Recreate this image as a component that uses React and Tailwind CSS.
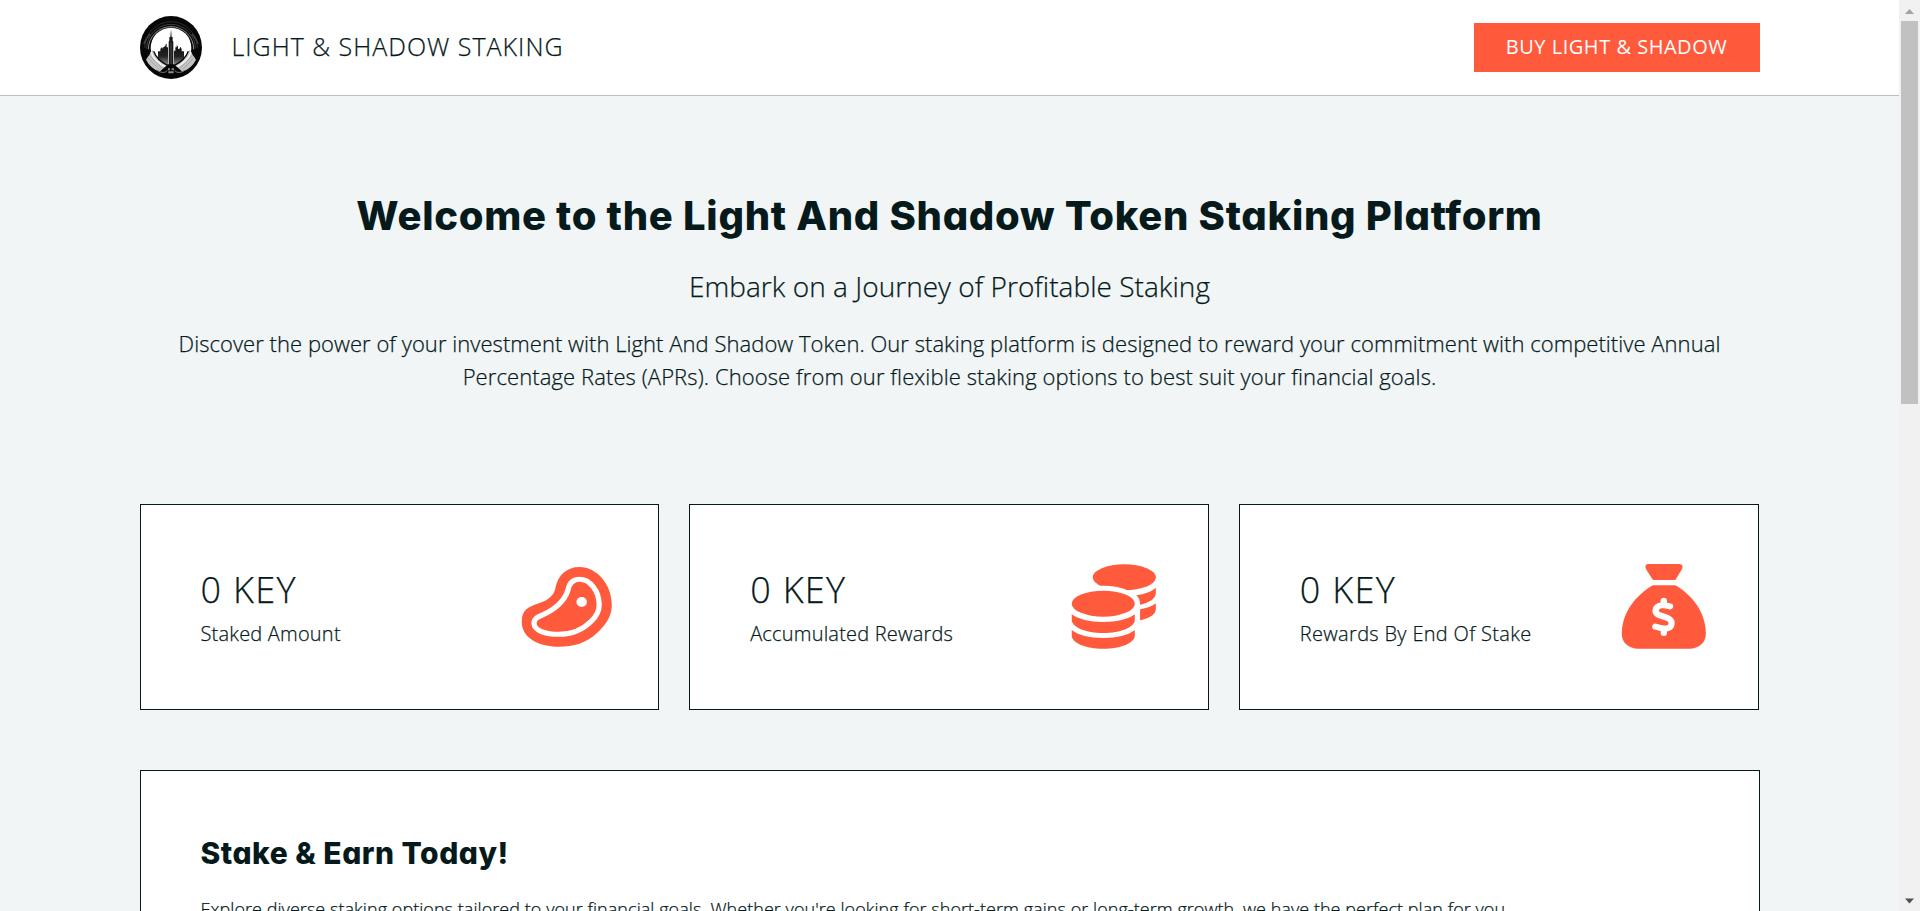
import React from "react";

function Logo() {
  return (
    <svg viewBox="0 0 186 189" className="h-[63px] w-[62px] shrink-0" aria-hidden="true">
      <defs>
        <clipPath id="disc">
          <ellipse cx="93" cy="94.5" rx="93" ry="94.5" />
        </clipPath>
        <linearGradient id="tower" x1="0" y1="0" x2="0" y2="1">
          <stop offset="0" stopColor="#111" />
          <stop offset="0.55" stopColor="#222" />
          <stop offset="1" stopColor="#9a9a9a" />
        </linearGradient>
      </defs>
      <g clipPath="url(#disc)">
        <rect width="186" height="189" fill="#070707" />
        <g fill="none">
          <path d="M14 96A79 79 0 0 1 172 96" stroke="#2b2b2b" strokeWidth="3" />
          <path d="M20 98A73 73 0 0 1 166 98" stroke="#5a5a5a" strokeWidth="2" />
          <path d="M25 100A68 68 0 0 1 161 100" stroke="#8f8f8f" strokeWidth="3" />
          <path d="M12 84Q18 66 30 54M174 84Q168 66 156 54" stroke="#444" strokeWidth="5" />
        </g>
        <circle cx="93" cy="96" r="61" fill="#fff" />
        <g fill="url(#tower)">
          <path d="M54 114V106H61V99L65 94L68 99V94H72L75 89H77V84H80V94H84V150H54Z" />
          <path d="M132 114V106H125V99L121 92L118 99H114V92L110 87V94H106V104H102V150H132Z" />
        </g>
        <path d="M93 40L95 63H98V74L100 77V152H86V77L88 74V63H91Z" fill="#1b1b1b" />
        <path d="M93 80V148" stroke="#777" strokeWidth="1.5" />
        <path d="M18 131L38 101Q46 132 82 150L60 168Q30 156 18 131Z" fill="#c4c4c4" />
        <path d="M168 131L148 101Q140 132 104 150L126 168Q156 156 168 131Z" fill="#c4c4c4" />
        <path d="M33 108Q43 138 80 154M153 108Q143 138 106 154" fill="none" stroke="#f4f4f4" strokeWidth="5" />
        <path d="M41 106Q50 132 84 149M145 106Q136 132 102 149" fill="none" stroke="#0a0a0a" strokeWidth="4" />
        <path d="M22 124L58 160M27 117L66 157M164 124L128 160M159 117L120 157" stroke="#999" strokeWidth="2" />
        <path d="M52 173L84 145H102L134 173L93 184Z" fill="#070707" />
        <path d="M50 162Q70 176 82 164M136 162Q116 176 104 164" fill="none" stroke="#777" strokeWidth="3" />
        <path d="M84 157H90V163H84ZM95 157H102V163H95ZM85 166H101V172H85Z" fill="#8d8d8d" />
      </g>
    </svg>
  );
}

function StatIcon({ children }) {
  return (
    <svg
      viewBox="1111 222 274 258"
      preserveAspectRatio="none"
      className="mt-px h-[86px] w-24 shrink-0 text-[#ff5a3c]"
      fill="currentColor"
      aria-hidden="true"
    >
      {children}
    </svg>
  );
}

function SteakIcon() {
  return (
    <StatIcon>
      <path d="M1281 231C1330 231 1373 283 1373 345C1373 378 1358 402 1330 430C1299 460 1265 470 1222 470C1163 470 1116 443 1116 395C1116 360 1135 350 1165 340C1198 328 1209 312 1213 290C1220 255 1245 231 1281 231Z" />
      <path
        d="M1281 268C1310 268 1337 302 1337 345C1337 363 1331 377 1315 393C1290 420 1260 433 1222 433C1184 433 1151 422 1151 400C1151 385 1161 381 1175 375C1215 356 1239 331 1248 300C1252 278 1262 268 1281 268Z"
        fill="none"
        stroke="#fff"
        strokeWidth="15"
      />
      <circle cx="1287" cy="336" r="15" fill="#fff" />
    </StatIcon>
  );
}

function CoinsIcon() {
  return (
    <StatIcon>
      <ellipse cx="1266" cy="262" rx="90" ry="39" />
      <ellipse cx="1206" cy="341" rx="105" ry="54" fill="#fff" />
      <ellipse cx="1206" cy="341" rx="90" ry="39" />
      <path d="M1116 373C1134 388 1167 396 1206 396S1278 388 1296 373V390C1296 411 1256 429 1206 429S1116 411 1116 390Z" />
      <path d="M1116 420C1134 436 1167 444 1206 444S1278 436 1296 420V437C1296 458 1256 476 1206 476S1116 458 1116 437Z" />
      <path d="M1300 316C1325 312 1345 304 1356 293V308C1356 325 1338 338 1311 344C1311 332 1308 322 1300 316Z" />
      <path d="M1311 358C1330 355 1346 349 1356 340V356C1356 373 1338 385 1311 391Z" />
    </StatIcon>
  );
}

function MoneyBagIcon() {
  return (
    <StatIcon>
      <path d="M1191 222H1281Q1293 224 1288 237L1269 270H1205L1185 237Q1180 224 1191 222Z" />
      <path d="M1205 286H1269C1315 314 1356 365 1356 432C1356 458 1336 476 1309 476H1163C1136 476 1116 458 1116 432C1116 365 1159 314 1205 286Z" />
      <path
        d="M1254 349C1243 346 1236 344 1228 346C1211 349 1207 367 1222 375C1232 380 1243 380 1252 387C1262 395 1260 411 1246 415C1234 418 1224 413 1212 410M1236 332V342M1236 418V429"
        fill="none"
        stroke="#fff"
        strokeWidth="18"
        strokeLinecap="round"
        strokeLinejoin="round"
      />
    </StatIcon>
  );
}

function StatCard({ label, labelClass, icon }) {
  return (
    <div className="flex h-[206px] items-start justify-between border border-[#061a1c] bg-white pt-[58px] pr-[42px] pl-[60px]">
      <div className="whitespace-nowrap">
        <div className="text-[36px] leading-[54px] tracking-[1.3px]">0 KEY</div>
        <div className={"mt-0.5 text-[20px] leading-[30px] " + labelClass}>{label}</div>
      </div>
      {icon}
    </div>
  );
}

function Scrollbar() {
  return (
    <div className="flex h-full w-[21px] shrink-0 flex-col items-center bg-[#f1f1f1]">
      <svg viewBox="0 0 21 21" className="h-[21px] w-[21px] shrink-0" aria-hidden="true">
        <path d="M6 14L10.5 9L15 14Z" fill="#a3a3a3" />
      </svg>
      <div className="h-[383px] w-[17px] bg-[#c1c1c1]" />
      <svg viewBox="0 0 21 21" className="mt-auto h-[21px] w-[21px] shrink-0" aria-hidden="true">
        <path d="M6 8.5L10.5 13.5L15 8.5Z" fill="#505050" />
      </svg>
    </div>
  );
}

const heading =
  "font-['Inter',sans-serif] font-[760] [font-feature-settings:'cv11'] [-webkit-text-stroke-width:0] text-[#061a1c] whitespace-nowrap";

export default function App() {
  return (
    <div className="flex h-[911px] w-full overflow-hidden bg-[#f1f5f6] font-['Open_Sans',sans-serif] font-light text-[#061a1c] [-webkit-text-stroke-width:0.25px]">
      <div className="h-full min-w-0 flex-1 overflow-hidden">
        <header className="h-24 border-b border-[#bcbfc0] bg-white">
          <div className="mx-auto flex h-full w-[1620px] items-center justify-between">
            <div className="flex items-center gap-[30px]">
              <Logo />
              <span className="pb-1 text-[25px] leading-9 tracking-[1px] whitespace-nowrap">
                LIGHT &amp; SHADOW STAKING
              </span>
            </div>
            <button className="flex h-[49px] w-[286px] items-center justify-center bg-[#ff5a3c] pb-px text-[20px] font-normal tracking-[0.52px] whitespace-nowrap text-white [-webkit-text-stroke-width:0]">
              BUY LIGHT &amp; SHADOW
            </button>
          </div>
        </header>

        <main className="mx-auto w-[1620px]">
          <section className="pt-[90px] text-center">
            <h1 className={heading + " text-[40px] leading-[60px] tracking-[0.7px]"}>
              Welcome to the Light And Shadow Token Staking Platform
            </h1>
            <h2 className="mt-[19px] text-[28px] leading-[42px] tracking-[0.04px]">
              Embark on a Journey of Profitable Staking
            </h2>
            <p className="mt-5 text-[22px] leading-[33px] whitespace-nowrap">
              <span className="tracking-[0.045px]">
                Discover the power of your investment with Light And Shadow Token. Our staking
                platform is designed to reward your commitment with competitive Annual
              </span>
              <br />
              <span className="tracking-[0.1px]">
                Percentage Rates (APRs). Choose from our flexible staking options to best suit your
                financial goals.
              </span>
            </p>
          </section>

          <section className="mt-[111px] grid w-[1619px] grid-cols-3 gap-[30px]">
            <StatCard label="Staked Amount" labelClass="tracking-[0.2px]" icon={<SteakIcon />} />
            <StatCard label="Accumulated Rewards" labelClass="tracking-[0.2px]" icon={<CoinsIcon />} />
            <StatCard label="Rewards By End Of Stake" labelClass="tracking-[0.32px]" icon={<MoneyBagIcon />} />
          </section>

          <section className="mt-[60px] h-[400px] border border-[#061a1c] bg-white px-[60px] pt-[60px]">
            <h3 className={heading + " text-[30px] leading-[45px] tracking-[0.5px]"}>
              Stake &amp; Earn Today!
            </h3>
            <p className="mt-5 text-[18px] leading-[27px] tracking-[0.05px] whitespace-nowrap">
              Explore diverse staking options tailored to your financial goals. Whether you're
              looking for short-term gains or long-term growth, we have the perfect plan for you.
            </p>
          </section>
        </main>
      </div>
      <Scrollbar />
    </div>
  );
}
